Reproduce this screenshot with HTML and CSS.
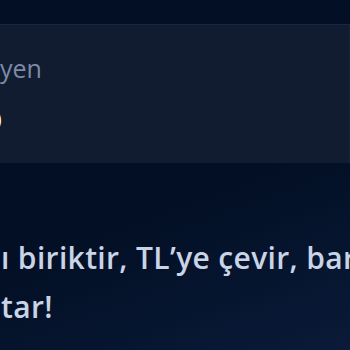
FILE: index.html
```html
<!DOCTYPE html>
<html lang="tr">
  <head>
    <meta charset="UTF-8" />
    <meta name="viewport" content="width=device-width, initial-scale=1.0" />
    <title>Puan</title>
    <link rel="stylesheet" href="styles.css">
  </head>
  <body>
    <div class="page">
      <div class="balance-card">
        <p class="label">yen</p>
        <p class="value"><span>0</span></p>
      </div>

      <div class="promo">
        <p>ı biriktir, TL’ye çevir, bar</p>
        <p>tar!</p>
      </div>
    </div>
  </body>
</html>
```

FILE: styles.css
```css
* {
  margin: 0;
  padding: 0;
  box-sizing: border-box;
  font-family: "Open Sans", Lato, sans-serif;
}

body {
  background: #020f24;
}

.page {
  width: 350px;
  height: 350px;
  overflow: hidden;
  padding-top: 24px;
  background: linear-gradient(160deg, #020f24 55%, #0a1a38 100%);
}

.balance-card {
  height: 139px;
  width: 350px;
  background: #111c31;
  border-top: 1px solid #1a2740;
  border-right: 1px solid #18243a;
  padding-top: 28px;
}

.label {
  color: #7d8ba6;
  font-size: 25px;
  line-height: 30px;
  white-space: nowrap;
}

.value {
  color: #ffffff;
  font-size: 24px;
  font-weight: 700;
  line-height: 30px;
  margin-top: 22px;
  white-space: nowrap;
}

.value span {
  margin-left: -12px;
}

.promo {
  padding-top: 70px;
  padding-left: 1px;
  color: #c9d4e6;
  font-size: 30px;
  font-weight: 600;
  letter-spacing: 0.35px;
  line-height: 49px;
  white-space: nowrap;
}
```
